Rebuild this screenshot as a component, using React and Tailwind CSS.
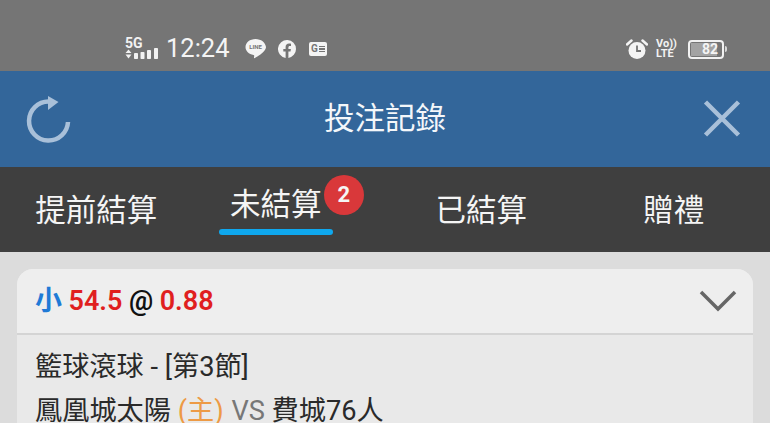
import React from 'react';

const font = "font-['Roboto','Noto_Sans_CJK_TC',sans-serif]";

const SignalIcon = () => (
    <div className="relative w-[35px] h-[24px] shrink-0">
        <span className="absolute left-0 top-[-1px] text-[14px] leading-[14px] font-bold text-[#f2f2f2]">5G</span>
        <svg width="35" height="24" viewBox="0 0 35 24" className="absolute inset-0" fill="#f2f2f2">
            <path d="M0.500 16h6l-3-3.500zM0.500 17.500h6l-3 4z" />
            <rect x="9" y="16" width="4" height="6" rx="0.800" />
            <rect x="15.500" y="15" width="4" height="7" rx="0.800" />
            <rect x="22" y="13" width="4" height="9" rx="0.800" />
            <rect x="29" y="11" width="4" height="11" rx="0.800" />
        </svg>
    </div>
);

const LineIcon = () => (
    <div className="relative w-[21px] h-[22px] flex justify-center shrink-0">
        <svg width="21" height="22" viewBox="0 0 21 22" className="absolute inset-0">
            <path fill="#f4f4f4" d="M10.500 1C4.900 1 .5 4.600 .5 9c0 4 3.400 7.200 8 7.900.6.1.8.5.7 1l-.2 1.600c-.1.6.3.9.9.6 2.800-1.500 8.600-5 10.300-8.500.5-.9.800-1.700.800-2.600C20.500 4.600 16.100 1 10.500 1z" />
        </svg>
        <span className="relative text-[6px] leading-[18px] font-bold text-[#757575]">LINE</span>
    </div>
);

const FacebookIcon = () => (
    <svg width="18" height="18" viewBox="0 0 18 18" className="shrink-0">
        <path fill="#f4f4f4" d="M18 9a9 9 0 1 0-10.400 8.900v-6.300H5.300V9h2.300V7c0-2.300 1.300-3.500 3.400-3.500 1 0 2 .2 2 .2v2.200h-1.100c-1.100 0-1.500.7-1.500 1.400V9h2.500l-.4 2.600h-2.100v6.300A9 9 0 0 0 18 9z" />
    </svg>
);

const NewsIcon = () => (
    <div className="flex items-center gap-[1px] w-[18px] h-[14px] px-[2px] bg-[#f4f4f4] rounded-[2px] shrink-0">
        <span className="text-[10px] leading-none font-bold text-[#757575]">G</span>
        <div className="flex flex-col gap-[1px] flex-1">
            <div className="h-[1.5px] bg-[#757575]"></div>
            <div className="h-[1.5px] bg-[#757575]"></div>
            <div className="h-[1.5px] bg-[#757575]"></div>
        </div>
    </div>
);

const AlarmIcon = () => (
    <svg width="22" height="22" viewBox="0 0 22 22" className="shrink-0">
        <circle cx="11" cy="12.500" r="8.500" fill="#f4f4f4" />
        <path d="M11 7.500v5.500h4" fill="none" stroke="#757575" strokeWidth="1.800" />
        <path d="M1 6.500 5.500 2.500M21 6.500 16.500 2.500" stroke="#f4f4f4" strokeWidth="2.500" strokeLinecap="round" />
    </svg>
);

const VolteIcon = () => (
    <div className="w-[20px] text-[11px] leading-[10.500px] font-bold text-[#f2f2f2] shrink-0">
        Vo))<br />LTE
    </div>
);

const Battery = () => (
    <div className="flex items-center gap-[1px] shrink-0">
        <div className="w-[36px] h-[19px] border-2 border-[#f2f2f2] rounded-[4px] p-[1px]">
            <div className="w-[26px] h-full bg-[#a3a3a3] flex items-center justify-end">
                <span className="text-[14px] leading-none font-bold text-[#f4f4f4] -mr-[1px]">82</span>
            </div>
        </div>
        <div className="w-[2px] h-[6px] bg-[#d8d8d8] rounded-r-sm"></div>
    </div>
);

const StatusBar = () => (
    <div className="h-[71px] bg-[#757575] flex items-center justify-between pl-[125px] pr-[43px] pt-[27px]">
        <div className="flex items-center">
            <SignalIcon />
            <span className="ml-[6px] text-[25.500px] leading-none text-[#f4f4f4] w-[64px]">12:24</span>
            <div className="ml-[15px]"><LineIcon /></div>
            <div className="ml-[12px]"><FacebookIcon /></div>
            <div className="ml-[13px]"><NewsIcon /></div>
        </div>
        <div className="flex items-center">
            <AlarmIcon />
            <div className="ml-[8px]"><VolteIcon /></div>
            <div className="ml-[12px]"><Battery /></div>
        </div>
    </div>
);

const Header = () => (
    <header className="h-[96px] bg-[#33669a] grid grid-cols-[1fr_auto_1fr] items-center px-[26px]">
        <svg width="46" height="50" viewBox="0 0 46 50" fill="none" className="mt-[2px]">
            <path d="M42 27A19.500 19.500 0 1 1 22.500 6.500h1" stroke="#a9c0d9" strokeWidth="4.500" />
            <path d="M22 1l10.500 6L22 15z" fill="#a9c0d9" />
        </svg>
        <h1 className="text-[30.500px] leading-none text-[#f4f7fa] font-normal">投注記錄</h1>
        <svg width="40" height="40" viewBox="0 0 40 40" fill="none" className="justify-self-end mr-[2px]">
            <path d="M3.500 3l33 33M36.500 3l-33 33" stroke="#a9c0d9" strokeWidth="4.500" />
        </svg>
    </header>
);

const Tabs = () => (
    <nav className="h-[85px] bg-[#3f3f3f] grid grid-cols-4 text-[30.500px] leading-none text-[#f5f5f5]">
        <div className="flex items-center justify-center pt-[3px]">提前結算</div>
        <div className="flex items-center justify-center">
            <div className="relative w-[114px] h-[85px] mr-[26px] flex flex-col items-center pt-[23px]">
                <span>未結算</span>
                <div className="absolute left-0 right-0 top-[62px] h-[6px] rounded-full bg-[#0fa8ee]"></div>
                <span className="absolute left-[105px] top-[8px] w-[40px] h-[40px] rounded-full bg-[#d9383a] flex items-center justify-center text-[22px] font-bold">2</span>
            </div>
        </div>
        <div className="flex items-center justify-center pt-[3px]">已結算</div>
        <div className="flex items-center justify-center pt-[3px]">贈禮</div>
    </nav>
);

const Card = () => (
    <article className="rounded-t-[16px] bg-[#e9e9e9] overflow-hidden">
        <div className="h-[66px] bg-[#eeeeee] border-b-2 border-[#d4d4d4] flex items-center justify-between pl-[18px] pr-[16px]">
            <div className="text-[27px] leading-none font-semibold flex items-center gap-[6.500px]">
                <span className="text-[#1f7ad6]">小</span>
                <span className="text-[#e01f1f]">54.5</span>
                <span className="text-[#111111]">@</span>
                <span className="text-[#e01f1f]">0.88</span>
            </div>
            <svg width="38" height="24" viewBox="0 0 38 24" fill="none" className="shrink-0">
                <path d="M2 3l17 17L36 3" stroke="#666666" strokeWidth="3.500" />
            </svg>
        </div>
        <div className="pl-[18px] pt-[10px] text-[#2a2a2a] text-[27.200px] leading-[44px]">
            <p className="whitespace-nowrap">籃球滾球 - [第3節]</p>
            <p className="whitespace-nowrap">
                鳳凰城太陽 <span className="text-[#ed9a45]">(主)</span> <span className="text-[#777777] ml-[1px]">VS</span> 費城76人
            </p>
        </div>
    </article>
);

export default function App() {
    return (
        <div className={`${font} w-[770px] h-[423px] overflow-hidden bg-[#dcdcdc]`}>
            <StatusBar />
            <Header />
            <Tabs />
            <div className="pt-[17px] px-[17px]">
                <Card />
            </div>
        </div>
    );
}
